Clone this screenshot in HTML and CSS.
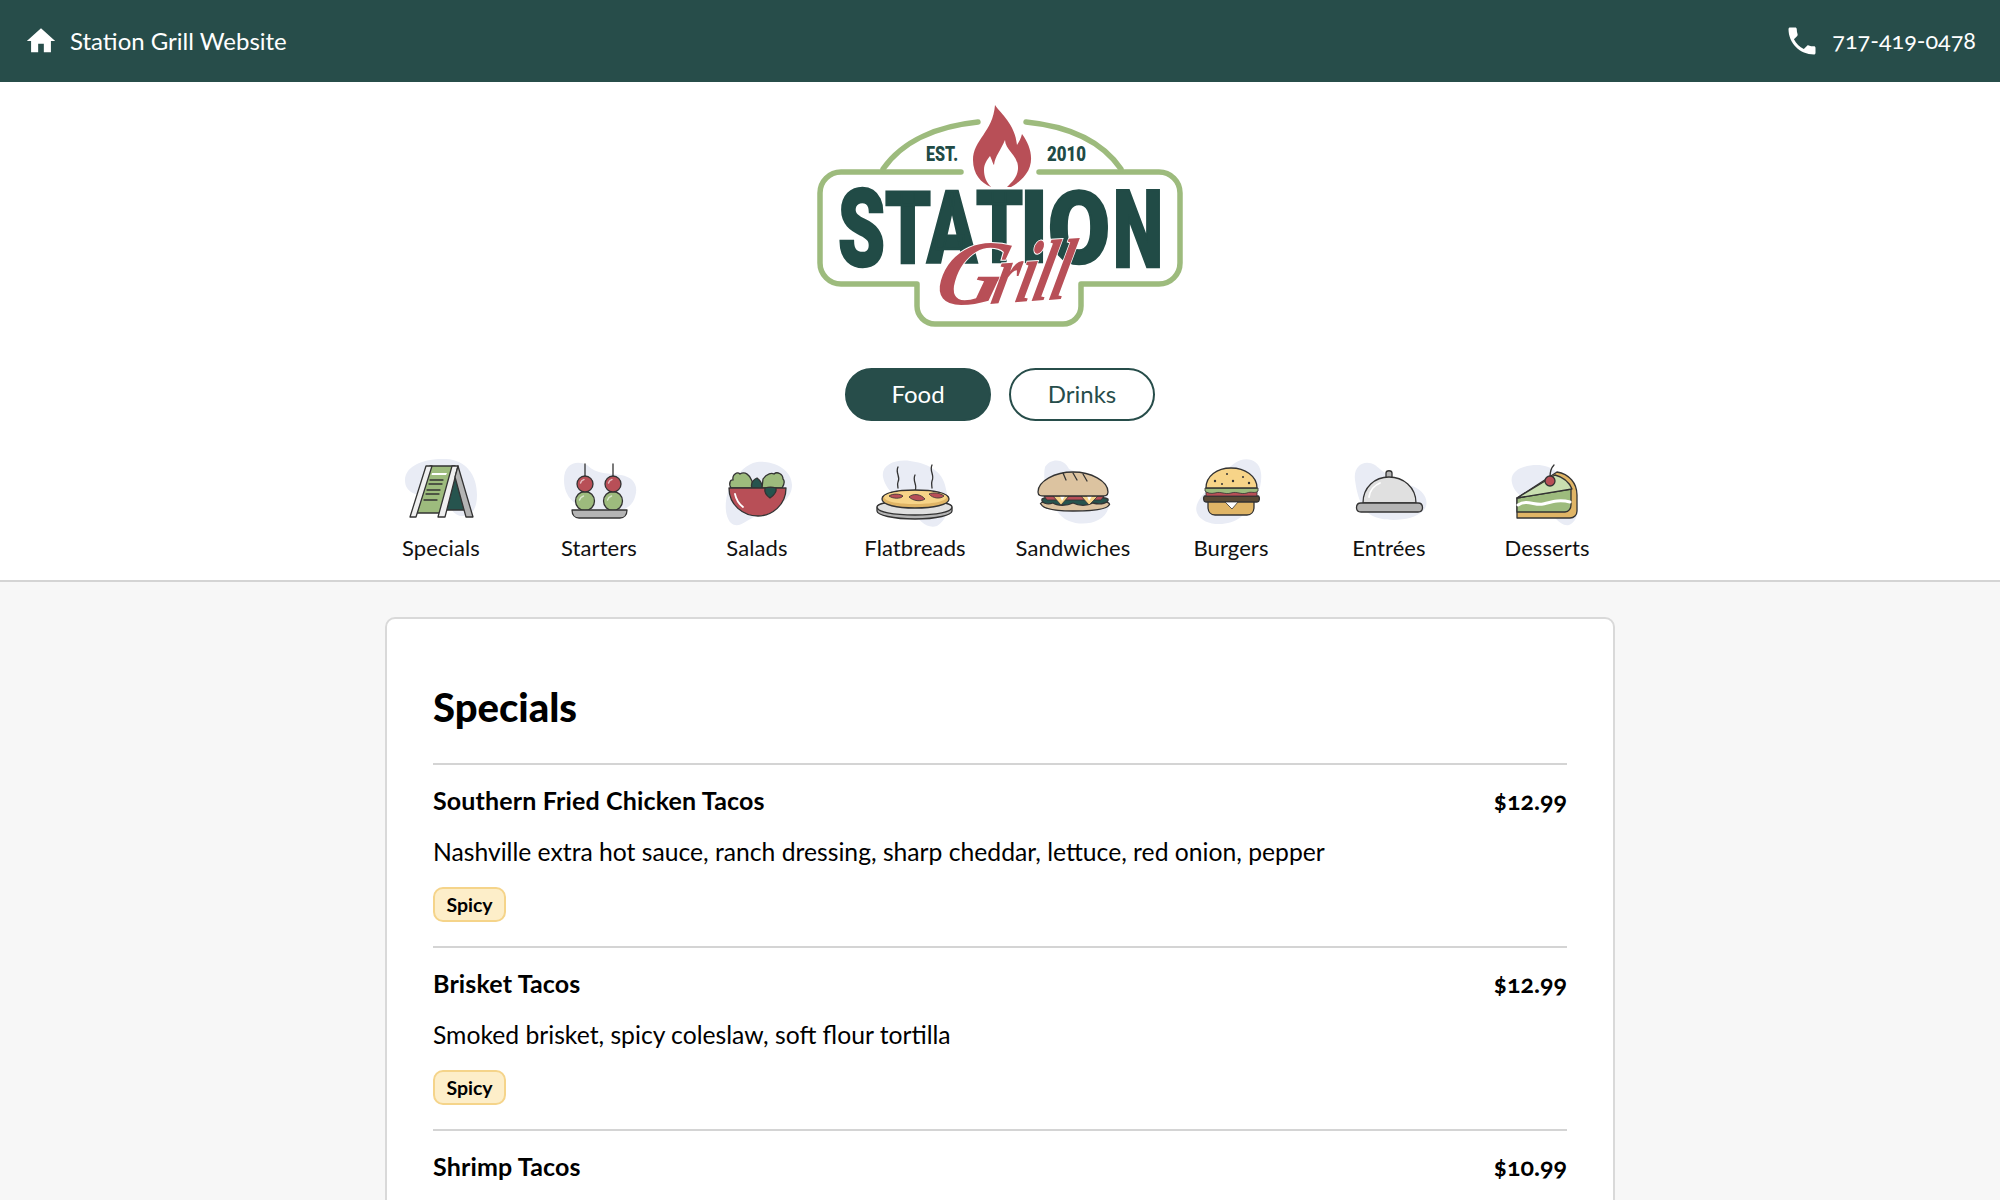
FILE: index.html
```html
<!DOCTYPE html>
<html lang="en">
<head>
<meta charset="utf-8">
<title>Station Grill Menu</title>
<link rel="stylesheet" href="styles.css">
</head>
<body>
<header class="topbar">
  <a class="topbar-link">
    <svg class="ico-home" viewBox="0 0 24 24"><path class="f-w" d="M10 20v-6h4v6h5v-8h3L12 3 2 12h3v8z"/></svg>
    <span class="topbar-text">Station Grill Website</span>
  </a>
  <a class="topbar-link">
    <svg class="ico-phone" viewBox="0 0 24 24"><path class="f-w" d="M6.62 10.79c1.44 2.83 3.76 5.14 6.59 6.59l2.2-2.2c.27-.27.67-.36 1.02-.24 1.12.37 2.33.57 3.57.57.55 0 1 .45 1 1V20c0 .55-.45 1-1 1-9.39 0-17-7.61-17-17 0-.55.45-1 1-1h3.5c.55 0 1 .45 1 1 0 1.25.2 2.45.57 3.57.11.35.03.74-.25 1.02l-2.2 2.2z"/></svg>
    <span class="topbar-text phone">717-419-0478</span>
  </a>
</header>

<section class="masthead">
  <svg class="logo" viewBox="1 0 440 260">
    <path class="logo-frame" d="M182,82 H62 a21,21 0 0 0 -21,21 V173 a21,21 0 0 0 21,21 H138 V216 a18,18 0 0 0 18,18 H284 a18,18 0 0 0 18,-18 V194 H380 a21,21 0 0 0 21,-21 V103 a21,21 0 0 0 -21,-21 H260"/>
    <path class="logo-frame" d="M104,79 C124,50 160,36 199,32 M247,32 C288,36 322,50 342,79"/>
    <path class="f-red" d="M216,15 C222,24 236,34 238,55 C240,52 242,48 243,44 C252,56 256,72 247,84 C242,91 237,94 232,97 L212,97 C202,93 194,84 194,70 C194,50 214,42 216,15Z"/>
    <path class="f-w" d="M226,50 C226,60 240,66 239,79 C238,88 233,92 228,97 L212,97 C207,92 205,86 205,80 C205,74 208,70 211,66 C213,70 214,74 215,75 C216,66 222,60 226,50Z"/>
    <text class="logo-small" x="147" y="71" textLength="32" lengthAdjust="spacingAndGlyphs">EST.</text>
    <text class="logo-small" x="268" y="71" textLength="39" lengthAdjust="spacingAndGlyphs">2010</text>
    <text class="logo-big logo-s" x="59" y="176" textLength="47" lengthAdjust="spacingAndGlyphs">S</text>
    <text class="logo-big logo-m" x="106" y="173" textLength="46" lengthAdjust="spacingAndGlyphs">T</text>
    <text class="logo-big logo-m" x="148" y="172" textLength="50" lengthAdjust="spacingAndGlyphs">A</text>
    <text class="logo-big logo-m" x="197" y="172" textLength="47" lengthAdjust="spacingAndGlyphs">T</text>
    <text class="logo-big logo-m" x="241" y="172" textLength="28" lengthAdjust="spacingAndGlyphs">I</text>
    <text class="logo-big logo-m" x="269" y="173" textLength="62" lengthAdjust="spacingAndGlyphs">O</text>
    <text class="logo-big logo-s" x="334" y="177" textLength="50" lengthAdjust="spacingAndGlyphs">N</text>
    <text class="logo-script logo-g" transform="translate(152 214) skewX(-16)" textLength="68" lengthAdjust="spacingAndGlyphs">G</text>
    <text class="logo-script logo-r" transform="translate(210 214) rotate(-4) skewX(-18)" textLength="76" lengthAdjust="spacingAndGlyphs">rill</text>
  </svg>

  <div class="tabs">
    <a class="tab tab-on"><span class="tab-label">Food</span></a>
    <a class="tab"><span class="tab-label">Drinks</span></a>
  </div>

  <nav class="cats">
    <a class="cat">
      <svg class="cat-ico" viewBox="0 0 80 70">
        <path class="f-blob" d="M4,25 C4,10 25,3 45,4 C65,5 76,20 76,40 C76,55 70,62 60,61 C50,60 48,45 30,42 C15,40 4,38 4,25Z"/>
        <path class="f-dark ol" d="M52,12 L66,55 L42,55 Z"/>
        <path class="f-green ol" d="M29,11 H54 L40,58 H16 Z"/>
        <path class="f-w" d="M31,18 H46 L45,20 H30.500 Z"/>
        <path class="ln" d="M29,25 H42 M28,29 H41 M26,35 H39 M25,39 H38 M23,45 H36"/>
        <path class="f-white ol" d="M25,11 H31 L15,62 H9 Z"/>
        <path class="f-white ol" d="M51,11 H57 L44,62 H37 Z"/>
        <path class="f-grey ol" d="M57,11 L72,62 H65 L54,22 Z"/>
      </svg>
      <span>Specials</span>
    </a>
    <a class="cat">
      <svg class="cat-ico" viewBox="0 0 80 70">
        <path class="f-blob" d="M5,25 C5,8 18,5 28,10 C38,20 50,18 62,20 C74,22 80,30 76,42 C72,55 60,58 40,56 C20,54 5,45 5,25Z"/>
        <path class="ln" d="M26,9 V22 M54,9 V22"/>
        <circle class="f-green ol" cx="26" cy="46" r="9.500"/><circle class="f-green ol" cx="54" cy="46" r="9.500"/>
        <circle class="f-red ol" cx="26" cy="29" r="8"/><circle class="f-red ol" cx="54" cy="29" r="8"/>
        <path class="hl-thin" d="M21.500,28 a5,5 0 0 1 3.500,-3.500 M49.500,28 a5,5 0 0 1 3.500,-3.500 M20.500,45 a6,6 0 0 1 4,-4 M48.500,45 a6,6 0 0 1 4,-4"/>
        <path class="f-grey ol" d="M13,55 H68 C68,60 65,63 61,63 H20 C16,63 13,60 13,55Z"/>
      </svg>
      <span>Starters</span>
    </a>
    <a class="cat">
      <svg class="cat-ico" viewBox="0 0 80 70">
        <path class="f-blob" d="M36,8 C50,3 75,12 75,30 C75,45 60,52 45,58 C30,64 22,75 14,68 C6,60 8,40 14,30 C20,20 26,12 36,8Z"/>
        <path class="f-green ol" d="M14,33 C11,28 14,24 16,25 C15,20 20,16 23,19 C28,16 33,20 35,26 L36,33Z"/>
        <path class="f-green ol" d="M45,33 L46,24 C50,18 55,18 57,19 C60,16 66,19 66,24 C69,27 66,31 65,33Z"/>
        <path class="f-dark ol" d="M35,33 C33,28 37,24 40,23 C44,26 46,30 44,34Z"/>
        <path class="f-red ol" d="M12,33 H69 C69,50 55,61 41,61 C26,61 12,50 12,33Z"/>
        <path class="f-dark ol" d="M48,33 C51,32 56,32 59,33 C60,38 56,41 53,43 C50,41 47,38 48,33Z"/>
        <path class="hl" d="M18,39 C19,44 22,49 26,52"/>
      </svg>
      <span>Salads</span>
    </a>
    <a class="cat">
      <svg class="cat-ico" viewBox="0 0 80 70">
        <path class="f-blob" d="M8,22 C6,10 20,4 35,6 C50,8 66,14 70,30 C74,45 76,62 62,71 C52,74 44,66 38,56 C28,44 12,40 8,22Z"/>
        <path class="ln" d="M23,12 C20,18 26,22 23,27 C22,29 23,32 23,33 M40,20 C37,26 43,30 40,36 M57,10 C54,16 60,20 57,26 C56,29 57,31 57,33"/>
        <path class="f-grey ol" d="M2,53 C2,48 18,46 40,46 C62,46 77,48 77,53 V56 C77,60 62,64 40,64 C18,64 2,60 2,56Z"/>
        <path class="f-light ol" d="M2,52 C2,48 18,46 40,46 C62,46 77,48 77,52 C77,57 62,60 40,60 C18,60 2,57 2,52Z"/>
        <path class="f-gold ol" d="M7,44 C7,38 22,35 40,35 C58,35 74,38 74,44 C74,50 58,53 40,53 C22,53 7,50 7,44Z"/>
        <path class="f-bun" d="M9,42 C10,38 24,36 40,36 C56,36 71,38 72,42 C70,47 56,49 40,49 C24,49 10,47 9,42Z"/>
        <path class="f-red ol-thin" d="M14,41 C18,38 26,39 28,41 C26,44 18,44 14,41Z M34,42 C38,38 46,39 50,44 C46,47 38,46 34,42Z M54,39 C58,37 66,38 69,41 C66,44 58,44 54,39Z"/>
      </svg>
      <span>Flatbreads</span>
    </a>
    <a class="cat">
      <svg class="cat-ico" viewBox="0 0 80 70">
        <path class="f-blob" d="M12,12 C18,2 32,4 36,14 C50,20 78,30 76,50 C74,68 50,72 36,66 C20,60 8,30 12,12Z"/>
        <path class="f-tan ol" d="M8,49 C6,49 10,46 14,46 H68 C74,46 78,49 76,50 C74,54 60,56 40,56 C22,56 10,54 8,49Z"/>
        <path class="f-dark ol" d="M9,44 C14,40 66,40 75,44 C76,48 68,50 60,48 C54,51 46,51 40,48 C34,51 24,51 20,48 C14,50 8,48 9,44Z"/>
        <path class="f-red ol-thin" d="M11,41 H71 L68,45 H14 Z"/>
        <path class="f-bun ol-thin" d="M20,41 H36 L28,50 Z M48,41 H65 L56,50 Z"/>
        <path class="f-w" d="M27,41 H32 L29,46 Z M54,41 H59 L56,46 Z"/>
        <path class="f-tan ol" d="M5,37 C5,26 22,17 40,17 C58,17 75,26 75,37 C75,41 72,41 68,41 H12 C8,41 5,41 5,37Z"/>
        <path class="ln" d="M30,18 L33,25 M40,18 L44,25 M50,19 L54,26"/>
      </svg>
      <span>Sandwiches</span>
    </a>
    <a class="cat">
      <svg class="cat-ico" viewBox="0 0 80 70">
        <path class="f-blob" d="M44,8 C52,2 68,2 70,18 C72,34 62,50 50,62 C38,72 12,72 6,58 C2,48 14,38 20,30 C26,22 36,14 44,8Z"/>
        <path class="f-gold ol" d="M17,45 H63 V52 C63,57 60,60 56,60 H24 C20,60 17,57 17,52Z"/>
        <path class="f-brown ol" d="M14,41 H67 C69,41 69,47 66,47 H15 C12,47 12,41 14,41Z"/>
        <path class="f-red ol-thin" d="M15,36 H66 V41 H15Z"/>
        <path class="f-green ol-thin" d="M14,33 H67 V36 C64,39 60,36 56,38 C50,40 46,36 40,38 C34,40 30,36 24,38 C20,39 16,38 14,36Z"/>
        <path class="f-bun ol" d="M15,33 C15,21 26,13 40,13 C54,13 66,21 66,33Z"/>
        <path class="f-w ol-thin" d="M34,47 H47 L41,54Z"/>
        <circle class="dot" cx="24" cy="26" r="1.200"/><circle class="dot" cx="36" cy="19" r="1"/><circle class="dot" cx="42" cy="26" r="1.200"/><circle class="dot" cx="52" cy="22" r="1"/><circle class="dot" cx="58" cy="28" r="1.200"/><circle class="dot" cx="31" cy="29" r="1"/>
      </svg>
      <span>Burgers</span>
    </a>
    <a class="cat">
      <svg class="cat-ico" viewBox="0 0 80 70">
        <path class="f-blob" d="M6,25 C4,10 16,4 26,10 C36,18 44,26 60,30 C76,34 82,48 74,56 C64,66 36,68 22,60 C12,54 8,40 6,25Z"/>
        <path class="f-grey ol" d="M37,23 V18 C37,15 43,15 43,18 V23Z"/>
        <path class="f-light ol" d="M14,48 C14,32 26,22 40,22 C54,22 67,32 67,48Z"/>
        <path class="hl" d="M20,42 C21,35 26,30 31,28"/>
        <path class="f-grey ol" d="M12,48 H69 C75,48 75,57 69,57 H12 C6,57 6,48 12,48Z"/>
      </svg>
      <span>Entrées</span>
    </a>
    <a class="cat">
      <svg class="cat-ico" viewBox="0 0 80 70">
        <path class="f-blob" d="M5,28 C2,16 16,10 30,10 C44,10 58,20 66,36 C74,50 72,66 62,70 C52,72 46,58 36,52 C24,46 8,42 5,28Z"/>
        <path class="f-gold ol" d="M10,43 L50,17 C62,19 70,28 70,40 V56 C70,60 67,63 63,63 H10 Z"/>
        <path class="f-green ol" d="M10,43 L64,34 V50 C64,53 62,57 58,57 H10 Z"/>
        <path class="f-lg ol" d="M10,43 L48,20 C56,22 62,27 65,34 Z"/>
        <path class="wave" d="M11,50 C20,44 28,51 36,49 C44,47 52,44 63,47"/>
        <path class="ln" d="M43,22 C43,16 44,13 47,10"/>
        <circle class="f-red ol" cx="43" cy="26" r="5"/>
      </svg>
      <span>Desserts</span>
    </a>
  </nav>
</section>

<main class="content">
  <section class="card">
    <h2 class="card-title">Specials</h2>
    <article class="item">
      <div class="item-head"><h3>Southern Fried Chicken Tacos</h3><span class="price">$12.99</span></div>
      <p class="item-desc">Nashville extra hot sauce, ranch dressing, sharp cheddar, lettuce, red onion, pepper</p>
      <span class="badge">Spicy</span>
    </article>
    <article class="item">
      <div class="item-head"><h3>Brisket Tacos</h3><span class="price">$12.99</span></div>
      <p class="item-desc">Smoked brisket, spicy coleslaw, soft flour tortilla</p>
      <span class="badge">Spicy</span>
    </article>
    <article class="item">
      <div class="item-head"><h3>Shrimp Tacos</h3><span class="price">$10.99</span></div>
    </article>
  </section>
</main>
</body>
</html>
```
FILE: styles.css
```css
* { box-sizing: border-box; }
html, body { margin: 0; height: 100%; overflow: hidden; }
body { font-family: Lato, "Noto Sans", sans-serif; background: #f7f7f7; color: #000; }
h2, h3, p { margin: 0; }

.topbar { height: 82px; background: #274d4a; color: #fff; display: flex; align-items: center; justify-content: space-between; padding: 0 24px; font-size: 24px; }
.topbar-link { display: flex; align-items: center; gap: 12px; }
.topbar-text { padding-bottom: 2px; }
.ico-home { width: 34px; height: 34px; }
.ico-phone { width: 36px; height: 36px; }
.phone { font-variant-numeric: oldstyle-nums; font-size: 23.400px; padding-bottom: 3px; }

.masthead { background: #fff; border-bottom: 2px solid #d4d4d4; display: flex; flex-direction: column; align-items: center; padding-top: 8px; height: 500px; }
.logo { width: 440px; height: 260px; display: block; }
.logo-frame { fill: none; stroke: #9dbb7d; stroke-width: 5.500; stroke-linecap: round; stroke-linejoin: round; }
.logo-small { font-family: Roboto, sans-serif; font-weight: 900; font-size: 19.500px; fill: #214b46; }
.logo-big { font-family: Roboto, sans-serif; font-weight: 900; fill: #214b46; stroke: #214b46; stroke-width: 2.500; }
.logo-s { font-size: 108px; }
.logo-m { font-size: 100px; }
.logo-script { font-family: "Liberation Serif", serif; font-style: italic; font-weight: 700; fill: #b84f57; stroke: #fff; stroke-width: 2; paint-order: stroke; }
.logo-g { font-size: 92px; }
.logo-r { font-size: 86px; }

.tabs { display: flex; gap: 18px; margin-top: 18px; }
.tab { width: 146px; height: 53px; border-radius: 27px; border: 2px solid #274d4a; color: #274d4a; background: #fff; font-size: 24px; display: flex; align-items: center; justify-content: center; }
.tab-label { padding-bottom: 3px; }
.tab-on { background: #274d4a; color: #fff; }

.cats { display: flex; margin-top: 34px; padding-right: 12px; }
.cat { width: 158px; display: flex; flex-direction: column; align-items: center; font-size: 22px; letter-spacing: 0.1px; color: #111; }
.cat-ico { width: 80px; height: 70px; display: block; margin-bottom: 9px; overflow: visible; }

.f-w { fill: #fff; }
.f-blob { fill: #e9ecf5; }
.f-red { fill: #b84f57; }
.f-green { fill: #9dbb7d; }
.f-lg { fill: #c9dfb0; }
.f-dark { fill: #26544e; }
.f-grey { fill: #b4b4b4; }
.f-light { fill: #e0e0e0; }
.f-white { fill: #efefef; }
.f-tan { fill: #dcc3a0; }
.f-gold { fill: #e0b566; }
.f-bun { fill: #f7d488; }
.f-brown { fill: #5a4a35; }
.dot { fill: #333; }
.ol { stroke: #333; stroke-width: 1.300; stroke-linejoin: round; }
.ol-thin { stroke: #333; stroke-width: 0.800; stroke-linejoin: round; }
.ln { fill: none; stroke: #333; stroke-width: 1.300; stroke-linecap: round; }
.hl { fill: none; stroke: #fff; stroke-width: 1.800; stroke-linecap: round; }
.hl-thin { fill: none; stroke: #fff; stroke-opacity: .6; stroke-width: 1.500; stroke-linecap: round; }
.wave { fill: none; stroke: #fff; stroke-width: 3; stroke-linecap: round; }

.content { display: flex; justify-content: center; padding-top: 35px; }
.card { width: 1230px; background: #fff; border: 2px solid #d9d9d9; border-radius: 10px; padding: 61px 46px 40px; }
.card-title { font-size: 40px; font-weight: 900; line-height: 54px; margin-bottom: 29px; }
.item { border-top: 2px solid #d4d4d4; height: 183px; padding-top: 20px; }
.item-head { display: flex; justify-content: space-between; align-items: center; line-height: 30px; }
.item-head h3 { font-size: 25px; font-weight: 700; letter-spacing: 0.15px; }
.price { font-size: 25px; font-weight: 700; font-variant-numeric: oldstyle-nums; }
.item-desc { font-size: 24.700px; line-height: 32px; margin-top: 21px; }
.badge { display: inline-flex; align-items: center; justify-content: center; width: 73px; height: 35px; margin-top: 19px; background: #fdeec9; border: 2px solid #f5d48a; border-radius: 10px; font-size: 19.500px; font-weight: 700; }
```
